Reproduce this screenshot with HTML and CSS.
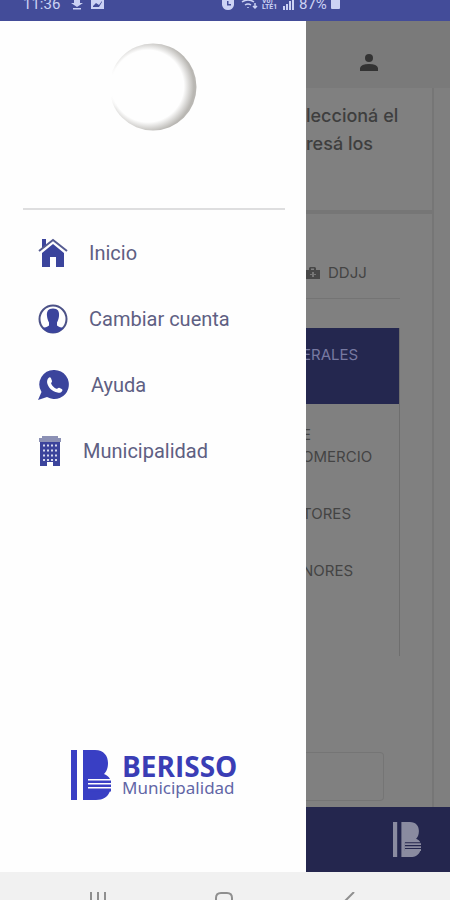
FILE: index.html
```html
<!DOCTYPE html>
<html lang="es">
<head>
<meta charset="utf-8">
<meta name="viewport" content="width=device-width, initial-scale=1">
<title>Berisso Municipalidad</title>
<link rel="stylesheet" href="styles.css">
</head>
<body>
<svg class="defs" aria-hidden="true">
  <symbol id="mark" viewBox="0 0 40 50">
    <path d="M0 0h6v50H0z"/>
    <path d="M12 0h12c9 0 13 6 13 13 0 6-2 9-4 11 3 1 5 3 6 5H17v12h22c-2 6-7 9-14 9H12z"/>
    <path d="M17 30.500h23v2.500H17zM17 34.500h23v2.500H17zM17 38.500h23v3H17z"/>
  </symbol>
</svg>
<div class="screen">
  <header class="status">
    <span class="time">11:36</span>
    <svg class="status-left" viewBox="0 0 34 10"><path d="M3 0h6v3h3L6 7 0 3h3zM2 8h8v1.500H2zM20 0h13v9H20z"/><path class="cut" d="M22 6l3-3 3 2 3-4v1l-3 5H22z"/></svg>
    <svg class="status-mid" viewBox="0 0 72 11"><path d="M0 0h12v5q-1 5-6 5T0 5zM64 4h2v6h-2zM61 6h2v4h-2zM67 1h2v9h-2zM70 0h2v10h-2z"/><path class="cut" d="M5 1h1.500v3H9v1.500H5z"/><path class="line" d="M20 2q6-4 12 0M23 5q3-2 6 0M26 7v1M33 3v5M31 6l2 2 2-2"/><text x="40" y="3">Vo)</text><text x="40" y="9">LTE1</text></svg>
    <span class="battery">87%</span><span class="cell"></span>
  </header>
  <div class="stage">
    <nav class="drawer">
      <svg class="avatar" viewBox="0 0 88 88">
        <defs>
          <radialGradient id="shade" cx=".44" cy=".49" r=".53"><stop offset=".78" stop-color="#fefefe"/><stop offset="1" stop-color="#b9b7b3"/></radialGradient>
          <radialGradient id="glow" cx="0" cy=".48" r=".32"><stop offset=".4" stop-color="#fefefe"/><stop offset="1" stop-color="#fefefe" stop-opacity="0"/></radialGradient>
        </defs>
        <circle cx="44" cy="44" r="43.500" fill="url(#shade)"/>
        <path d="M0 0h44v88H0z" fill="url(#glow)"/>
      </svg>
      <hr class="rule">
      <ul class="menu">
        <li><a href="#inicio"><svg class="icon" viewBox="0 0 30 30"><path d="M4 15L15 6l11 9v14h-8V19h-6v10H4z"/><path d="M4 1h4v7l-4 3z"/><path class="roof" d="M1 13L15 2l14 11"/></svg><span>Inicio</span></a></li>
        <li><a href="#cuenta"><svg class="icon" viewBox="0 0 30 30"><circle class="ring" cx="15" cy="15" r="13.500"/><path d="M15 4.500c5 0 6.500 3 6 7.500-.3 3-1.200 5-2 6.500v3c2 1.500 4 2 6.500 2.500Q21.500 29 15 29T4.500 24c2.500-.5 4.500-1 6.500-2.500v-3c-.8-1.500-1.700-3.500-2-6.500-.5-4.500 1-7.500 6-7.500z"/></svg><span>Cambiar cuenta</span></a></li>
        <li><a href="#ayuda"><svg class="icon chat" viewBox="0 0 32 32"><path d="M16.500 1A14.500 14.500 0 1 1 9 28L0 31l3.500-8A14.500 14.500 0 0 1 16.500 1z"/><path class="phone" d="M10.500 9c1-1 2-.8 2.500.3l1 2.700c.3 1-1.300 1.800-.8 2.800 1.200 2.400 3 4 5.200 5 1 .4 1.800-1.500 2.800-1.100l2.500 1.300c1 .6.900 1.500.3 2.300-1 1.500-2.700 1.700-4.500 1.300-5.500-1.300-9-4.900-10.200-9.200-.6-2 0-4.200 1.200-5.400z"/></svg><span>Ayuda</span></a></li>
        <li><a href="#municipalidad"><svg class="icon tower" viewBox="0 0 22 30"><path class="top" d="M3 0h16v2h3v4H0V2h3z"/><path d="M1 6h20v24h-7v-4H8v4H1z"/><path class="windows" d="M4 9.500h15M4 14.500h15M4 19.500h15M4 24h15"/></svg><span>Municipalidad</span></a></li>
      </ul>
      <div class="brand">
        <svg class="brand-mark" role="img" aria-label="Berisso"><use href="#mark"/></svg>
        <div><strong>BERISSO</strong><small>Municipalidad</small></div>
      </div>
    </nav>
    <main class="page">
      <div class="topbar"><svg class="person" viewBox="0 0 18 17"><circle cx="9" cy="4" r="4"/><path d="M0 17v-3q1-4 9-4t9 4v3z"/></svg></div>
      <section class="card intro"><p>leccioná el<br>resá los</p></section>
      <section class="card form">
        <div class="tab"><svg class="bag" viewBox="0 0 14 12"><path d="M0 3h3V1l1-1h5l1 1v2h4v9H0zM5 3h3V1.500H5z" fill-rule="evenodd"/><path class="plus" d="M6 5h2v2h2v1H8v2H6V8H4V7h2z"/></svg><span>DDJJ</span></div>
        <ul class="steps">
          <li class="active">ERALES</li>
          <li>E<br>OMERCIO</li>
          <li>TORES</li>
          <li>NORES</li>
        </ul>
        <input class="field" type="text" aria-label="Dato" tabindex="-1">
      </section>
      <footer class="foot"><svg class="foot-mark" role="img" aria-label="Berisso"><use href="#mark"/></svg></footer>
    </main>
  </div>
  <footer class="keys">
    <svg viewBox="0 0 18 8"><path d="M2 0v8M9 0v8M16 0v8"/></svg>
    <svg viewBox="0 0 18 8"><path d="M1 10V6q0-5 5-5h6q5 0 5 5v4"/></svg>
    <svg viewBox="0 0 18 8"><path d="M14 0L5 9"/></svg>
  </footer>
</div>
</body>
</html>
```
FILE: styles.css
```css
* { box-sizing: border-box; }
body { margin: 0; font-family: Roboto, "Liberation Sans", sans-serif; }
ul { list-style: none; margin: 0; padding: 0; }
.defs { position: absolute; width: 0; height: 0; }
.screen { display: flex; flex-direction: column; min-height: 100vh; }

.status { display: flex; height: 21px; padding-left: 23px; overflow: hidden; background: #434c99; color: #ccd2f4; font-size: 15px; line-height: 8px; }
.status svg { fill: #ccd2f4; }
.status .cut { fill: #434c99; }
.status .line { fill: none; stroke: #ccd2f4; stroke-width: 1.5; }
.status text { font-size: 7px; font-weight: 700; }
.time { width: 48px; }
.status-left { width: 34px; height: 10px; }
.status-mid { width: 72px; height: 11px; margin: 0 5px 0 117px; }
.battery { width: 32px; }
.cell { width: 9px; height: 9px; background: #ccd2f4; border-radius: 0 0 1px 1px; }

.stage { display: flex; flex: 1; }
.drawer { display: flex; flex-direction: column; width: 68%; background: #fefefe; }
.avatar { width: 88px; height: 88px; margin: 22px auto 77px; }
.rule { width: calc(100% - 44px); height: 2px; margin: 0 21px 10px 23px; border: 0; background: #dededf; }
.menu a { display: flex; align-items: center; height: 66px; padding-left: 38px; color: #5e6083; font-size: 20px; text-decoration: none; }
.icon { width: 30px; height: 30px; margin-right: 21px; fill: #3b449c; }
.icon.chat { width: 32px; height: 32px; }
.icon.tower { width: 24px; }
.roof { fill: none; stroke: #555b91; stroke-width: 2; }
.ring { fill: none; stroke: #4c5287; stroke-width: 2; }
.phone { fill: #fff; }
.icon .top { fill: #8c91b5; }
.windows { stroke: #d5d8ed; stroke-width: 2; stroke-dasharray: 2 2; }
.brand { display: flex; align-items: center; gap: 11px; margin: auto 0 72px 71px; }
.brand-mark { width: 40px; height: 50px; fill: #393fc4; }
.brand strong { display: block; color: #3a3db5; font: 700 28px/26px "Open Sans", sans-serif; }
.brand small { display: block; color: #6266a6; font: 400 17px/18px "Noto Sans", sans-serif; }

.page { display: flex; flex-direction: column; flex: 1; min-width: 0; overflow: hidden; background: #7f7f7f; color: #444; font-family: Inter, sans-serif; }
.topbar { height: 67px; padding: 33px 0 0 54px; background: #7a7a7a; }
.person { display: block; width: 18px; height: 17px; fill: #333; }
.card { margin-right: 16px; border-right: 2px solid #767676; background: #808080; }
.intro { height: 126px; padding-top: 14px; border-bottom: 4px solid #767676; }
.intro p { margin: 0; color: #3e3e3e; font-size: 18px; font-weight: 500; line-height: 28px; }
.form { flex: 1; padding: 45px 32px 6px 0; display: flex; flex-direction: column; }
.tab { display: flex; align-items: center; gap: 8px; height: 40px; padding-bottom: 12px; border-bottom: 1px solid #747474; font-size: 15px; }
.bag { width: 14px; height: 12px; fill: #484848; }
.plus { fill: #777; }
.steps { height: 328px; margin: 29px 0 0 -4px; border-right: 1px solid #6e6e6e; font-size: 15px; line-height: 22px; }
.steps li { margin-bottom: 35px; }
.steps .active { height: 76px; margin-bottom: 20px; padding-top: 16px; background: #24274f; color: #7779a1; }
.field { width: calc(100% - 16px); height: 49px; margin-top: auto; border: 1px solid #757575; border-left: 0; border-radius: 0 4px 4px 0; background: transparent; }
.foot { height: 65px; padding: 15px 0 0 87px; background: #24264e; }
.foot-mark { display: block; width: 28px; height: 35px; fill: #8a8ba0; }

.keys { display: flex; justify-content: space-between; align-items: flex-end; height: 28px; padding: 0 92px 0 89px; background: #f1f1f1; }
.keys svg { width: 18px; height: 8px; fill: none; stroke: #8f8f8f; stroke-width: 2; }
```
